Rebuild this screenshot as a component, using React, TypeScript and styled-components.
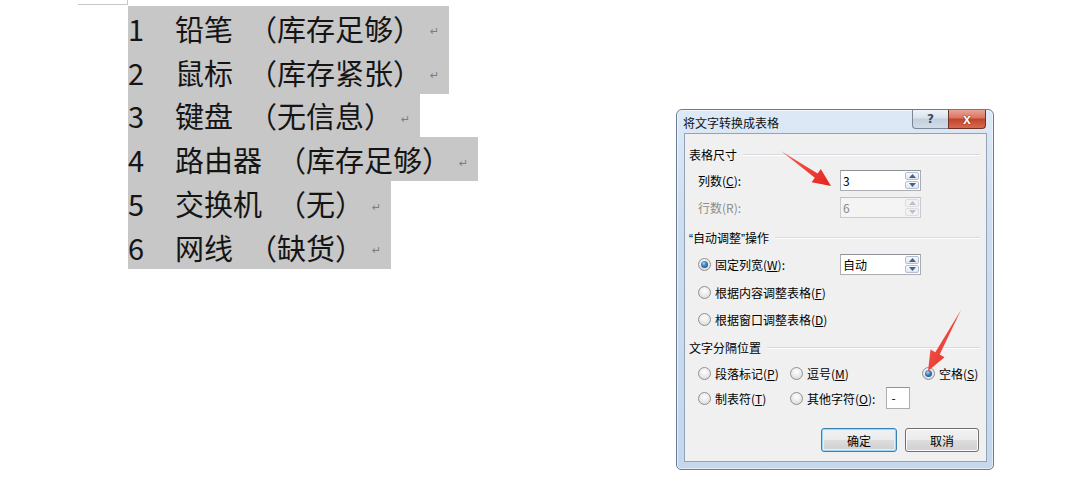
import React from "react";
import styled, { createGlobalStyle } from "styled-components";

const GlobalStyle = createGlobalStyle`
  html, body {
    margin: 0;
    padding: 0;
    background: #ffffff;
  }
  body {
    width: 1073px;
    height: 482px;
    overflow: hidden;
    font-family: "Noto Sans CJK SC", "Noto Sans", sans-serif;
  }
`;

interface Item {
  num: string;
  name: string;
  note: string;
}

const items: Item[] = [
  { num: "1", name: "铅笔", note: "（库存足够）" },
  { num: "2", name: "鼠标", note: "（库存紧张）" },
  { num: "3", name: "键盘", note: "（无信息）" },
  { num: "4", name: "路由器", note: "（库存足够）" },
  { num: "5", name: "交换机", note: "（无）" },
  { num: "6", name: "网线", note: "（缺货）" },
];

const Spinner = ({ disabled }: { disabled?: boolean }) => (
  <SpinBox>
    <SpinButton $disabled={disabled}>
      <svg width="7" height="4" viewBox="0 0 7 4">
        <path d="M0 4 L3.5 0 L7 4 Z" fill={disabled ? "#b9c0c9" : "#4b5f80"} />
      </svg>
    </SpinButton>
    <SpinButton $disabled={disabled}>
      <svg width="7" height="4" viewBox="0 0 7 4">
        <path d="M0 0 L3.5 4 L7 0 Z" fill={disabled ? "#b9c0c9" : "#4b5f80"} />
      </svg>
    </SpinButton>
  </SpinBox>
);

const RadioOption = ({ checked, children }: { checked?: boolean; children: React.ReactNode }) => (
  <Option>
    <Radio $checked={checked} />
    <span>{children}</span>
  </Option>
);

const App = () => {
  return (
    <>
      <GlobalStyle />
      <Page>
        <Document>
          <CornerMark />
          {items.map((item) => (
            <Line key={item.num}>
              <Num>{item.num}</Num>
              <span>{item.name}</span>
              <Note>{item.note}</Note>
              <Mark>↵</Mark>
            </Line>
          ))}
        </Document>

        <Dialog>
          <TitleBar>
            <Title>将文字转换成表格</Title>
            <CaptionButtons>
              <HelpButton>?</HelpButton>
              <CloseButton>x</CloseButton>
            </CaptionButtons>
          </TitleBar>
          <Body>
            <Section $mt={13}>表格尺寸</Section>
            <FieldRow $mt={7}>
              <FieldLabel>
                列数(<u>C</u>):
              </FieldLabel>
              <TextBox>
                <BoxText>3</BoxText>
                <Spinner />
              </TextBox>
            </FieldRow>
            <FieldRow $mt={6}>
              <FieldLabel $disabled>行数(R):</FieldLabel>
              <TextBox $disabled>
                <BoxText $disabled>6</BoxText>
                <Spinner disabled />
              </TextBox>
            </FieldRow>

            <Section $mt={12}>
              <span>
                <Quote>“</Quote>自动调整<Quote>”</Quote>操作
              </span>
            </Section>
            <FieldRow $mt={8}>
              <FieldLabel>
                <RadioOption checked>
                  固定列宽(<u>W</u>):
                </RadioOption>
              </FieldLabel>
              <TextBox>
                <BoxText>自动</BoxText>
                <Spinner />
              </TextBox>
            </FieldRow>
            <OptionRow $mt={8}>
              <RadioOption>
                根据内容调整表格(<u>F</u>)
              </RadioOption>
            </OptionRow>
            <OptionRow $mt={9}>
              <RadioOption>
                根据窗口调整表格(<u>D</u>)
              </RadioOption>
            </OptionRow>

            <Section $mt={12}>文字分隔位置</Section>
            <SeparatorGrid $mt={8}>
              <RadioOption>
                段落标记(<u>P</u>)
              </RadioOption>
              <RadioOption>
                逗号(<u>M</u>)
              </RadioOption>
              <RadioOption checked>
                空格(<u>S</u>)
              </RadioOption>
            </SeparatorGrid>
            <SeparatorGrid $mt={5}>
              <RadioOption>
                制表符(<u>T</u>)
              </RadioOption>
              <OtherCell>
                <RadioOption>
                  其他字符(<u>O</u>):
                </RadioOption>
                <CharBox>-</CharBox>
              </OtherCell>
            </SeparatorGrid>

            <ButtonRow>
              <PushButton $default>确定</PushButton>
              <PushButton>取消</PushButton>
            </ButtonRow>
          </Body>
        </Dialog>

        <Arrows width="1073" height="482" viewBox="0 0 1073 482">
          <defs>
            <linearGradient id="arrowRed" x1="0" y1="0" x2="1" y2="1">
              <stop offset="0" stopColor="#f7665a" />
              <stop offset="1" stopColor="#e4231c" />
            </linearGradient>
          </defs>
          <polygon
            points="781,151 814.8,177.7 811.6,182.3 831,186 820.8,169.1 817.6,173.6"
            fill="url(#arrowRed)"
          />
          <polygon
            points="961,310 935.3,352.2 930.5,349.6 928,371 944.5,357.2 939.7,354.6"
            fill="url(#arrowRed)"
          />
        </Arrows>
      </Page>
    </>
  );
};

const Page = styled.div`
  position: relative;
  display: flex;
  align-items: flex-start;
  width: 1073px;
  height: 482px;
`;

const Document = styled.div`
  width: 478px;
  display: flex;
  flex-direction: column;
  align-items: flex-start;
`;

const CornerMark = styled.div`
  width: 49px;
  height: 4px;
  margin-left: 78px;
  margin-bottom: 1px;
  border-bottom: 1px solid #c8c8c8;
  border-right: 1px solid #c8c8c8;
`;

const Line = styled.div`
  display: flex;
  align-items: center;
  height: 43.8px;
  margin-left: 128px;
  padding-right: 11px;
  background: #c7c7c7;
  font-size: 29px;
  color: #151515;
  white-space: nowrap;
`;

const Num = styled.span`
  width: 47px;
`;

const Note = styled.span`
  margin-left: 15px;
`;

const Mark = styled.span`
  width: 8px;
  margin-left: 8px;
  margin-top: 8px;
  font-family: "DejaVu Sans", sans-serif;
  font-size: 11px;
  color: #7d7d7d;
`;

const Dialog = styled.div`
  margin-top: 109px;
  margin-left: 198px;
  width: 318px;
  height: 361px;
  box-sizing: border-box;
  display: flex;
  flex-direction: column;
  padding: 0 6px 7px 7px;
  border: 1px solid #6c7c90;
  border-radius: 6px 6px 5px 5px;
  background: linear-gradient(180deg, #dde9f6 0%, #cfdeef 30%, #c4d7ed 100%);
  box-shadow: inset 0 0 0 1px rgba(255, 255, 255, 0.55);
  font-size: 12px;
  color: #000;
`;

const TitleBar = styled.div`
  display: flex;
  justify-content: space-between;
  height: 23px;
  flex-shrink: 0;
`;

const Title = styled.div`
  padding: 5px 0 0 0;
  margin-left: -1px;
  font-size: 12px;
  line-height: 16px;
  color: #111;
`;

const CaptionButtons = styled.div`
  display: flex;
  height: 19px;
  margin-right: 1px;
`;

const HelpButton = styled.div`
  width: 36px;
  box-sizing: border-box;
  display: flex;
  align-items: center;
  justify-content: center;
  border: 1px solid #7a8797;
  border-top: none;
  border-right: none;
  border-radius: 0 0 0 4px;
  background: linear-gradient(180deg, #eef3f8 0%, #d9e2ec 45%, #c3cfdc 50%, #d3dde9 100%);
  font-family: "DejaVu Sans", sans-serif;
  font-size: 12px;
  font-weight: bold;
  color: #3a4a5e;
`;

const CloseButton = styled.div`
  width: 38px;
  box-sizing: border-box;
  display: flex;
  align-items: center;
  justify-content: center;
  border: 1px solid #6d3126;
  border-top: none;
  border-radius: 0 0 4px 0;
  background: linear-gradient(180deg, #e8a496 0%, #d9735f 45%, #c2432b 50%, #d66a4e 100%);
  font-family: "Liberation Sans", sans-serif;
  font-size: 14px;
  font-weight: bold;
  line-height: 1;
  color: #ffffff;
  text-shadow: 0 0 1px #5a1a10, 0 0 1px #5a1a10;
`;

const Body = styled.div`
  flex: 1;
  display: flex;
  flex-direction: column;
  padding: 0 6px 0 4px;
  border: 1px solid #91a3b9;
  background: #f0f0f0;
`;

const Section = styled.div<{ $mt: number }>`
  display: flex;
  align-items: center;
  gap: 6px;
  height: 16px;
  margin-top: ${({ $mt }) => $mt}px;
  line-height: 16px;
  white-space: nowrap;

  &::after {
    content: "";
    flex: 1;
    height: 0;
    border-top: 1px solid #d5dbe1;
    border-bottom: 1px solid #ffffff;
  }
`;

const Quote = styled.span`
  font-family: "Liberation Sans", sans-serif;
`;

const FieldRow = styled.div<{ $mt: number }>`
  display: flex;
  align-items: center;
  height: 21px;
  margin-top: ${({ $mt }) => $mt}px;
`;

const FieldLabel = styled.div<{ $disabled?: boolean }>`
  width: 142px;
  margin-left: 9px;
  color: ${({ $disabled }) => ($disabled ? "#8d8d8d" : "#000")};
  white-space: nowrap;
`;

const TextBox = styled.div<{ $disabled?: boolean }>`
  width: 81px;
  height: 21px;
  box-sizing: border-box;
  display: flex;
  align-items: stretch;
  border: 1px solid ${({ $disabled }) => ($disabled ? "#c9cbcf" : "#abadb3")};
  border-top-color: ${({ $disabled }) => ($disabled ? "#bfc1c5" : "#8f9299")};
  background: ${({ $disabled }) => ($disabled ? "#f4f4f4" : "#ffffff")};
`;

const BoxText = styled.div<{ $disabled?: boolean }>`
  flex: 1;
  padding-left: 2px;
  line-height: 19px;
  font-size: 12px;
  color: ${({ $disabled }) => ($disabled ? "#8a8a8a" : "#000")};
`;

const SpinBox = styled.div`
  width: 16px;
  display: flex;
  flex-direction: column;
  gap: 1px;
  padding: 1px;
  box-sizing: border-box;
`;

const SpinButton = styled.div<{ $disabled?: boolean }>`
  flex: 1;
  display: flex;
  align-items: center;
  justify-content: center;
  border: 1px solid ${({ $disabled }) => ($disabled ? "#dadde1" : "#b4bfcd")};
  border-radius: 2px;
  background: ${({ $disabled }) =>
    $disabled ? "#f2f2f2" : "linear-gradient(180deg, #f6f9fc 0%, #dfe7f1 100%)"};
`;

const OptionRow = styled.div<{ $mt: number }>`
  display: flex;
  align-items: center;
  height: 18px;
  margin-top: ${({ $mt }) => $mt}px;
  padding-left: 9px;
`;

const Option = styled.div`
  display: flex;
  align-items: center;
  gap: 4px;
  white-space: nowrap;
`;

const Radio = styled.span<{ $checked?: boolean }>`
  position: relative;
  width: 13px;
  height: 13px;
  box-sizing: border-box;
  flex-shrink: 0;
  border-radius: 50%;
  border: 1px solid #8f9090;
  background: radial-gradient(circle at 50% 35%, #ffffff 0%, #e6e6e6 60%, #cfcfcf 100%);

  &::after {
    content: "";
    display: ${({ $checked }) => ($checked ? "block" : "none")};
    position: absolute;
    left: 2px;
    top: 2px;
    width: 7px;
    height: 7px;
    border-radius: 50%;
    background: radial-gradient(circle at 40% 35%, #a9d3f7 0%, #3f7fc2 40%, #143d6e 100%);
  }
`;

const SeparatorGrid = styled.div<{ $mt: number }>`
  display: grid;
  grid-template-columns: 92px 132px auto;
  align-items: center;
  min-height: 18px;
  margin-top: ${({ $mt }) => $mt}px;
  padding-left: 9px;
`;

const OtherCell = styled.div`
  display: flex;
  align-items: center;
  grid-column: 2 / 4;
`;

const CharBox = styled.div`
  width: 24px;
  height: 22px;
  box-sizing: border-box;
  margin-left: 11px;
  padding-left: 4px;
  border: 1px solid #abadb3;
  border-top-color: #8f9299;
  background: #ffffff;
  line-height: 19px;
`;

const ButtonRow = styled.div`
  display: flex;
  justify-content: flex-end;
  gap: 8px;
  margin-top: 19px;
  padding-right: 1px;
`;

const PushButton = styled.div<{ $default?: boolean }>`
  width: ${({ $default }) => ($default ? 76 : 74)}px;
  height: 24px;
  box-sizing: border-box;
  display: flex;
  align-items: center;
  justify-content: center;
  border: 1px solid ${({ $default }) => ($default ? "#3c7fb1" : "#707070")};
  border-radius: 3px;
  background: linear-gradient(180deg, #f2f2f2 0%, #ebebeb 49%, #dddddd 50%, #cfcfcf 100%);
  box-shadow: ${({ $default }) =>
    $default ? "inset 0 0 0 1px #9fd5f5, inset 0 0 0 2px #e3f1fb" : "inset 0 0 0 1px #fcfcfc"};
  font-size: 12px;
  color: #000;
`;

const Arrows = styled.svg`
  position: absolute;
  left: 0;
  top: 0;
  pointer-events: none;
`;

export default App;
